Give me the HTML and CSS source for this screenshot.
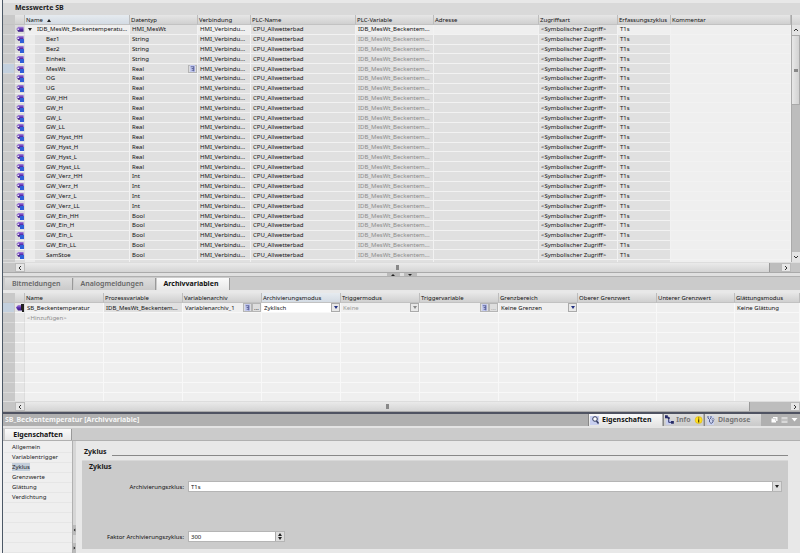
FILE: index.html
```
<!DOCTYPE html>
<html lang="de">
<head>
<meta charset="utf-8">
<title>Messwerte SB</title>
<link rel="stylesheet" href="styles.css">
</head>
<body>
<svg class="defs" aria-hidden="true">
  <defs>
    <linearGradient id="violet" x1="0" y1="0" x2="0" y2="1"><stop offset="0" stop-color="#b08be0"/><stop offset=".5" stop-color="#5a2fb0"/><stop offset="1" stop-color="#3a1a80"/></linearGradient>
    <symbol id="tag" viewBox="0 0 10 9"><path d="M1 4.500L3 2H9V7.500H3Z" fill="url(#violet)"/><path d="M2 4H4V5.500H2Z" fill="#e8e0f4"/></symbol>
    <symbol id="tag-member" viewBox="0 0 10 9"><path d="M1 3.500L3 1H9V6.500H3Z" fill="url(#violet)"/><path d="M2 3H4V4.500H2Z" fill="#e8e0f4"/><path d="M5 4.500H9.500V9H5Z" fill="#2f5fd8"/></symbol>
    <symbol id="tag-log" viewBox="0 0 10 9"><path d="M1 4.500L3 2H8V7.500H3Z" fill="url(#violet)"/><path d="M6 1H9V9H7V7H6Z" fill="#222"/></symbol>
    <symbol id="ref" viewBox="0 0 8 8"><path d="M1 0H7V8H1Z" fill="#c3c9ee"/><path d="M2 2H5M3 4H5M3 6H5" stroke="#555a90"/><path d="M5 1.500H6V7H5Z" fill="#3b4280"/></symbol>
  </defs>
</svg>
<main class="app">
  <section class="tags">
    <h1>Messwerte SB</h1>
    <div class="tags-grid">
      <div class="clip">
        <table class="grid members">
          <colgroup><col class="c-gutter"><col class="c-icon"><col class="c-105"><col class="c-68"><col class="c-53"><col class="c-105"><col class="c-78"><col class="c-105"><col class="c-79"><col class="c-53"><col></colgroup>
          <thead><tr><th></th><th></th><th class="sorted">Name <span class="up"></span></th><th>Datentyp</th><th>Verbindung</th><th>PLC-Name</th><th>PLC-Variable</th><th>Adresse</th><th>Zugriffsart</th><th>Erfassungszyklus</th><th>Kommentar</th></tr></thead>
          <tbody id="members"></tbody>
        </table>
      </div>
      <div class="vscroll"><span class="cap"></span><button aria-label="Nach oben"><svg viewBox="0 0 8 8"><path d="M2 5L4 3L6 5"/></svg></button><span class="thumb"></span><span class="track"></span><button aria-label="Nach unten"><svg viewBox="0 0 8 8"><path d="M2 3L4 5L6 3"/></svg></button></div>
    </div>
    <div class="hscroll"><button aria-label="Nach links"><svg viewBox="0 0 8 8"><path d="M5 2L3 4L5 6"/></svg></button><span class="thumb"></span><span class="track short"></span><button aria-label="Nach rechts"><svg viewBox="0 0 8 8"><path d="M3 2L5 4L3 6"/></svg></button></div>
  </section>
  <div class="splitter"><button aria-label="Einklappen"><i class="up"></i></button><button aria-label="Ausklappen"><i class="down"></i></button></div>
  <nav class="tabs"><button>Bitmeldungen</button><button>Analogmeldungen</button><button class="active">Archivvariablen</button></nav>
  <section class="logs">
    <div class="clip">
      <table class="grid log">
        <colgroup><col class="c-gutter"><col class="c-icon"><col class="c-79"><col class="c-79"><col class="c-79"><col class="c-79"><col class="c-79"><col class="c-79"><col class="c-79"><col class="c-79"><col class="c-78"><col></colgroup>
        <thead><tr><th></th><th></th><th>Name</th><th>Prozessvariable</th><th>Variablenarchiv</th><th class="sorted">Archivierungsmodus</th><th>Triggermodus</th><th>Triggervariable</th><th>Grenzbereich</th><th>Oberer Grenzwert</th><th>Unterer Grenzwert</th><th>Glättungsmodus</th></tr></thead>
        <tbody id="logs">
          <tr class="current"><td></td><td><svg class="ico"><use href="#tag-log"/></svg></td><td>SB_Beckentemperatur</td><td class="locked">IDB_MesWt_Beckentem...</td>
            <td><div class="cell"><span>Variablenarchiv_1</span><button class="mini" aria-label="Archiv"><svg><use href="#ref"/></svg></button><button class="mini" aria-label="Archiv wählen">...</button></div></td>
            <td class="edit"><div class="pick"><select aria-label="Archivierungsmodus"><option>Zyklisch</option></select><b><i class="down"></i></b></div></td>
            <td><div class="pick off"><select aria-label="Triggermodus" disabled><option>Keine</option></select><b><i class="down"></i></b></div></td>
            <td><div class="cell"><span></span><button class="mini" aria-label="Variable"><svg><use href="#ref"/></svg></button><button class="mini faint" aria-label="Variable wählen">...</button></div></td>
            <td><div class="pick"><select aria-label="Grenzbereich"><option>Keine Grenzen</option></select><b><i class="down"></i></b></div></td><td></td><td></td><td>Keine Glättung</td></tr>
          <tr><td></td><td></td><td class="hint">&lt;Hinzufügen&gt;</td><td></td><td></td><td></td><td></td><td></td><td></td><td></td><td></td><td></td></tr>
        </tbody>
      </table>
    </div>
    <div class="hscroll"><button aria-label="Nach links"><svg viewBox="0 0 8 8"><path d="M5 2L3 4L5 6"/></svg></button><span class="thumb"></span><span class="track long"></span><button aria-label="Nach rechts"><svg viewBox="0 0 8 8"><path d="M3 2L5 4L3 6"/></svg></button></div>
  </section>
  <section class="inspector">
    <header>
      <h2>SB_Beckentemperatur [Archivvariable]</h2>
      <nav class="views">
        <button class="active"><svg viewBox="0 0 10 10"><path d="M0 1H9V10H0Z" fill="#c8cfef"/><circle cx="5" cy="4" r="2.300" fill="#fff" stroke="#333b60"/><path d="M6.500 6L8.500 8.500" stroke="#333b60" stroke-width="1.500"/></svg>Eigenschaften</button>
        <button class="info"><svg viewBox="0 0 10 10"><path d="M1 5H7V10H1Z" fill="#c8cfef"/><path d="M1 2H4V7.500H8" fill="none" stroke="#252a66"/><path d="M0 0H3V3H0ZM3 2H5V4H3ZM6.500 6H9.500V9H6.500Z" fill="#252a66"/></svg>Info<svg viewBox="0 0 10 10" class="badge"><circle cx="5" cy="5" r="3.800" fill="#ffdf20" stroke="#d0a800" stroke-width=".5"/><path d="M5 2.200V3.400M5 4.200V7.800" stroke="#554400" stroke-width="1.300"/></svg></button>
        <button class="diag"><svg viewBox="0 0 10 10"><path d="M1 1H8V10H1Z" fill="#ccd3ee"/><path d="M2 1V3Q3.500 6 5 3V1M3.500 5V7Q5 10 7 7V5" fill="none" stroke="#55608c"/><circle cx="7" cy="4.500" r="1" fill="#fff" stroke="#55608c" stroke-width=".7"/></svg>Diagnose</button>
      </nav>
      <div class="win">
        <button aria-label="Abdocken"><svg viewBox="0 0 8 8"><path d="M2.500 1H7V5H5.500V6.500H1V2.500H2.500Z" fill="#fff"/><path d="M2.500 2.700H5.300V5" fill="none" stroke="#aaa" stroke-width=".6"/></svg></button>
        <button aria-label="Verkleinern"><svg viewBox="0 0 8 8"><path d="M1 1H7V7H1Z" fill="#d8d8d8"/><path d="M1 4H7" stroke="#aaa"/></svg></button>
        <button aria-label="Einklappen"><svg viewBox="0 0 8 8"><path d="M1 2H7L4 5.500Z" fill="#fff"/></svg></button>
      </div>
    </header>
    <nav class="subtabs"><button class="active">Eigenschaften</button></nav>
    <div class="body">
      <ul class="side">
        <li><a href="#">Allgemein</a></li><li><a href="#">Variablentrigger</a></li><li><a href="#" class="on">Zyklus</a></li><li><a href="#">Grenzwerte</a></li><li><a href="#">Glättung</a></li><li><a href="#">Verdichtung</a></li><li></li><li></li><li></li><li></li><li></li>
      </ul>
      <div class="sash"><button aria-label="Links"><svg viewBox="0 0 4 8"><path d="M3 2V6L1 4Z"/></svg></button><button aria-label="Rechts"><svg viewBox="0 0 4 8"><path d="M1 2V6L3 4Z"/></svg></button></div>
      <div class="content">
        <h3>Zyklus</h3>
        <form class="box">
          <h4>Zyklus</h4>
          <div class="field"><label for="cycle">Archivierungszklus:</label><div class="combo"><input id="cycle" type="text" value="T1s"><button type="button" aria-label="Auswählen"><i class="down"></i></button></div></div>
          <div class="field"><label for="factor">Faktor Archivierungszyklus:</label><div class="spin"><input id="factor" type="text" value="300"><button type="button" aria-label="Ändern"><i class="up"></i><i class="down"></i></button></div></div>
        </form>
      </div>
    </div>
  </section>
</main>
<script src="app.js"></script>
</body>
</html>
```

FILE: styles.css
```
* { box-sizing: border-box; }
body { margin: 0; background: #f4f4f4; color: #111; font: 6px/8px "Noto Sans", "Open Sans", sans-serif; }
button, input, select { font: inherit; color: inherit; margin: 0; padding: 0; border: 0; border-radius: 0; background: none; appearance: none; }
button { display: flex; align-items: center; justify-content: center; }
h1, h2, h3, h4 { margin: 0; font-size: 7px; line-height: 10px; color: #1a1a1a; }
.defs { position: absolute; width: 0; height: 0; }
.app { display: flex; flex-direction: column; height: 100vh; overflow: hidden; margin-left: 2px; border-left: 1px solid #4c5866; background: #e8e8e8; }

.tags { flex: none; border-top: 3px solid #e8e8e8; }
.tags h1 { height: 12px; padding-left: 12px; background: #d9d9d9; }
.tags-grid { display: flex; height: 247px; }
.clip { flex: 1; min-width: 0; overflow: hidden; }

.grid { width: 100%; table-layout: fixed; border-spacing: 0; }
.members { height: 255px; }
.c-gutter { width: 12px; } .c-icon { width: 10px; } .c-53 { width: 53px; } .c-68 { width: 68px; } .c-78 { width: 78px; } .c-79 { width: 79px; } .c-105 { width: 105px; }
.grid th { height: 10px; padding: 0 0 0 1px; font-weight: 400; text-align: left; white-space: nowrap; border-right: 1px solid #bdbdbd; border-bottom: 1px solid #c2c2c2; background: linear-gradient(#e6e6e6, #d0d0d0); }
.grid th.sorted { background: linear-gradient(#e6ebf0, #d3dbe3); }
.grid .sorted .up { margin-left: 3px; }
.grid td { height: 9px; padding: 0 0 0 2px; overflow: hidden; white-space: nowrap; border-right: 1px solid #f2f2f2; border-bottom: 1px solid #f2f2f2; background: #e0e0e0; }
.grid td:first-child, .grid th:first-child { background: #c9c9c9; border-right-color: #c9c9c9; }
.grid td:first-child { border-bottom-color: #d8d8d8; }
.grid td:nth-child(2) { padding: 0; background: #dcdcdc; border-right-color: #dcdcdc; }
.grid tr.current td:first-child { background: #c3d0de; }
.grid td.pale, .members tr:first-child .open { background: #efefef; }
.members .dim { color: #8c8c8c; }
.members td.name { padding-left: 21px; background: linear-gradient(90deg, #ebebeb 10px, #e0e0e0 10px); }
.members tr:first-child td.name { padding-left: 3px; }
.members .name .down { margin-right: 5px; }
.up, .down { display: inline-block; width: 0; height: 0; border: 2px solid transparent; }
.up { border-top: 0; border-bottom: 3px solid #222; }
.down { border-bottom: 0; border-top: 3px solid #222; }
.ico { display: block; width: 10px; height: 8px; }
.log td { height: 10px; background: #efefef; border-color: #f8f8f8; }
.log .ico { height: 9px; }
.log td.locked { background: #e0e0e0; }
.log td.edit { background: #fff; }
.log td:nth-child(2) { background: #e6e6e6; }
.log .hint { color: #8c8c8c; }
.cell, .pick { display: flex; align-items: center; height: 8px; }
.log .cell, .log .pick { height: 9px; }
.cell span { flex: 1; overflow: hidden; }
.mini { flex: none; align-self: stretch; width: 9px; border: 1px solid #b5b5b5; background: #dedede; }
.mini svg { width: 7px; height: 7px; }
.faint { color: #999; }
.pick select { flex: 1; min-width: 0; height: 9px; opacity: 1; }
.pick b { display: flex; align-items: center; justify-content: center; width: 9px; height: 9px; border: 1px solid #aaa; background: #e8e8e8; }
.pick .down { border-top-color: #203080; }
.pick.off { color: #999; }
.pick.off .down { border-top-color: #888; }

.vscroll { display: flex; flex-direction: column; width: 9px; border-left: 1px solid #aaa; background: #dedede; }
.vscroll .cap { height: 10px; background: linear-gradient(#e6e6e6, #d0d0d0); }
.vscroll .thumb { height: 70px; border: 1px solid #aaa; border-left: 0; background: linear-gradient(#888, #888) center / 4px 3px no-repeat, linear-gradient(90deg, #e8e8e8, #d2d2d2); }
.vscroll .track { flex: 1; background: #bdbdbd; }
.vscroll button { height: 10px; background: #e4e4e4; }
.hscroll { display: flex; height: 11px; padding-left: 12px; border-top: 1px solid #ddd; border-bottom: 1px solid #aaa; background: #c5c5c5; }
.tags .hscroll { padding-right: 9px; }
.hscroll button { width: 10px; border: 1px solid #bbb; background: #e6e6e6; }
.hscroll svg, .vscroll svg { flex: none; width: 8px; height: 8px; fill: none; stroke: #333; }
.hscroll .thumb { flex: 1; border-right: 1px solid #999; background: linear-gradient(#888, #888) center / 3px 5px no-repeat, linear-gradient(#eaeaea, #d4d4d4); }
.hscroll .track { background: #bdbdbd; }
.short { width: 11px; } .long { width: 40px; }
.splitter { display: flex; justify-content: center; gap: 4px; flex: none; height: 3px; background: #e0e0e0; }
.splitter button { width: 13px; background: #bbb; }
.splitter i { border-width: 0 2px 2px; }
.splitter i.down { border-width: 2px 2px 0; }

.tabs, .subtabs { display: flex; flex: none; height: 14px; padding: 1px 0 0 2px; background: #cbcbcb; border-top: 1px solid #b0b0b0; }
.tabs button { padding: 0 11px 0 7px; border-right: 1px solid #999; background: linear-gradient(#dedede, #cacaca); font-size: 7px; font-weight: 600; color: #666; }
.tabs button + button { margin-left: 1px; }
.tabs .active, .subtabs .active { background: linear-gradient(#fafafa, #e8e8e8); color: #111; font-weight: 700; }
.logs { display: flex; flex-direction: column; flex: 1; min-height: 0; padding-top: 3px; }

.inspector { display: flex; flex-direction: column; flex: none; height: 141px; border-top: 2px solid #4f5362; }
.inspector header { display: flex; align-items: stretch; height: 14px; background: #b0b0b0; border-bottom: 2px solid #e4e4e4; }
.inspector h2 { flex: 1; padding: 1px 0 0 2px; color: #f6f6f6; }
.views { display: flex; gap: 1px; }
.views button { justify-content: flex-start; width: 57px; border-left: 1px solid #888; background: linear-gradient(#dedede, #cacaca); font-size: 7px; font-weight: 700; color: #777; }
.views svg { width: 10px; height: 10px; margin: 0 2px 0 1px; }
.views .active { width: 74px; background: linear-gradient(#fafafa, #e4e4e4); color: #111; }
.views .info { width: 40px; }
.views .badge { margin: 0 0 0 3px; }
.win { display: flex; gap: 1px; padding: 0 1px 0 9px; }
.win svg { width: 9px; height: 8px; }
.subtabs { height: 13px; border-top: 0; border-bottom: 1px solid #b0b0b0; }
.subtabs button { width: 67px; font-size: 7px; border-right: 1px solid #999; }
.body { display: flex; flex: 1; min-height: 0; }
.side { width: 69px; margin: 0; padding: 2px 0 0 1px; list-style: none; background: #efefef; overflow: hidden; }
.side li { height: 10px; padding-left: 8px; line-height: 9px; border-bottom: 1px solid #e6e6e6; }
.side a { color: #222; text-decoration: none; }
.side .on { background: #c3cedb; }
.sash { display: flex; flex-direction: column; justify-content: flex-end; gap: 8px; width: 4px; background: #d6d6d6; border-left: 1px solid #b0b0b0; }
.sash button { height: 10px; background: #bbb; }
.sash svg { width: 4px; height: 8px; fill: #111; }
.content { display: flex; flex-direction: column; flex: 1; gap: 3px; padding: 6px 12px 4px 6px; }
.content h3 { display: flex; align-items: flex-end; gap: 5px; padding-left: 2px; }
.content h3::after { content: ""; flex: 1; height: 1px; margin-bottom: 1px; background: #888; }
.box { display: flex; flex-direction: column; flex: 1; gap: 41px; padding: 1px 7px; background: #cbcbcb; border-top: 1px solid #d8d8d8; }
.box h4 { margin-bottom: -31px; }
.field { display: flex; align-items: center; gap: 5px; height: 9px; }
.field label { width: 95px; text-align: right; white-space: nowrap; }
.combo, .spin { display: flex; height: 9px; background: #fff; outline: 1px solid #b5b5b5; }
.combo { flex: 1; } .spin { flex: none; width: 95px; }
.field input { flex: 1; min-width: 0; height: 9px; padding-left: 2px; }
.field button { width: 9px; background: #dedede; border-left: 1px solid #aaa; }
.spin button { flex-direction: column; gap: 1px; }
```

FILE: app.js
```
const names = ["Bez1", "Bez2", "Einheit", "MesWt", "OG", "UG", "GW_HH", "GW_H", "GW_L", "GW_LL",
  "GW_Hyst_HH", "GW_Hyst_H", "GW_Hyst_L", "GW_Hyst_LL", "GW_Verz_HH", "GW_Verz_H", "GW_Verz_L", "GW_Verz_LL",
  "GW_Ein_HH", "GW_Ein_H", "GW_Ein_L", "GW_Ein_LL", "SamStoe", "SamStoe"];
const typeOf = i => i < 3 ? "String" : i < 14 ? "Real" : i < 18 ? "Int" : "Bool";
const row = (icon, name, type, first, current) => `<tr class="${current ? "current" : ""}"><td></td>
<td><svg class="ico"><use href="#${icon}"/></svg></td><td class="name open">${name}</td><td>${type}</td>
<td class="open">HMI_Verbindu...</td><td>CPU_Allwetterbad</td><td class="open ${first ? "" : "dim"}">IDB_MesWt_Beckentem...</td>
<td class="open"></td><td>&lt;Symbolischer Zugriff&gt;</td><td class="open">T1s</td><td class="pale"></td></tr>`;
const refCell = '<div class="cell"><span>Real</span><button class="mini" aria-label="Datentyp"><svg><use href="#ref"/></svg></button></div>';
document.getElementById("members").innerHTML =
  row("tag", '<i class="down"></i>IDB_MesWt_Beckentemperatu...', "HMI_MesWt", true, false) +
  names.map((n, i) => row("tag-member", n, i === 3 ? refCell : typeOf(i), false, i === 3)).join("");
const blank = "<tr>" + "<td></td>".repeat(12) + "</tr>";
document.getElementById("logs").insertAdjacentHTML("beforeend", blank.repeat(9));
```
